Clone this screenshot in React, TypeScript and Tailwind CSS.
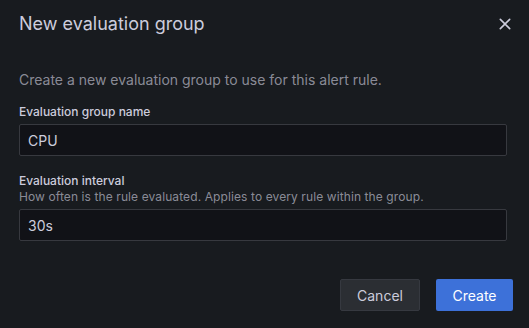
import React from 'react';

function CloseIcon() {
  return (
    <svg width="16" height="16" viewBox="0 0 24 24" fill="none" stroke="currentColor" strokeWidth="2.4" strokeLinecap="round">
      <path d="M5 5l14 14M19 5L5 19" />
    </svg>
  );
}

export default function App() {
  return (
    <div className="w-[529px] h-[328px] bg-[#181b1f] text-[#ccccdc] font-['Inter',sans-serif] flex flex-col overflow-hidden">
      {/* Header */}
      <div className="h-[48px] flex items-center justify-between pl-[19px] pr-[14px]">
        <h1 className="text-[18px] leading-none font-normal">New evaluation group</h1>
        <button className="w-5 h-5 flex items-center justify-center text-[#ccccdc]">
          <CloseIcon />
        </button>
      </div>

      {/* Body */}
      <div className="pl-[19px] pr-[22px] pt-[22px] flex flex-col">
        <p className="text-[14px] leading-[20px] text-[rgba(204,204,220,0.65)]">
          Create a new evaluation group to use for this alert rule.
        </p>

        <label className="mt-[14px] text-[12px] leading-[16px] font-medium">Evaluation group name</label>
        <div className="mt-[4px] h-[32px] bg-[#111217] border border-[#37393f] rounded-[2px] flex items-center px-[8px] text-[14px]">
          CPU
        </div>

        <label className="mt-[17px] text-[12px] leading-[16px] font-medium">Evaluation interval</label>
        <p className="text-[12px] leading-[16px] tracking-[0.1px] text-[rgba(204,204,220,0.65)]">
          How often is the rule evaluated. Applies to every rule within the group.
        </p>
        <div className="mt-[4px] h-[32px] bg-[#111217] border border-[#37393f] rounded-[2px] flex items-center px-[8px] text-[14px]">
          30s
        </div>
      </div>

      {/* Footer */}
      <div className="mt-[38px] flex justify-end gap-[16px] pr-[16px]">
        <button className="h-[32px] w-[80px] rounded-[2px] bg-[#2b2e33] border border-[#363940] text-[14px] text-[#ccccdc]">
          Cancel
        </button>
        <button className="h-[32px] w-[77px] rounded-[2px] bg-[#3d71d9] text-[14px] text-white">
          Create
        </button>
      </div>
    </div>
  );
}
